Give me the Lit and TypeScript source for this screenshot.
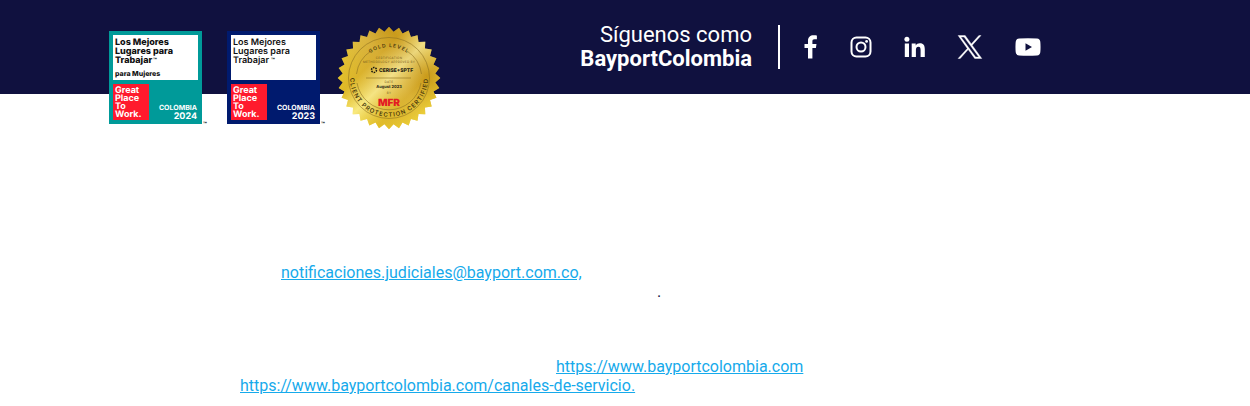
import { LitElement, html, svg, css } from "lit";
import { customElement, property } from "lit/decorators.js";

const TEETH = 32;

/** Outline of the serrated edge of the gold seal, centred on the origin. */
function sealEdge(outer: number, inner: number): string {
  const points: string[] = [];
  for (let i = 0; i < TEETH * 2; i++) {
    const radius = i % 2 ? inner : outer;
    const angle = (i * Math.PI) / TEETH - Math.PI / 2;
    points.push(`${(radius * Math.cos(angle)).toFixed(2)},${(radius * Math.sin(angle)).toFixed(2)}`);
  }
  return points.join(" ");
}

@customElement("work-badge")
export class WorkBadge extends LitElement {
  @property() year = "";
  @property() audience = "";

  static styles = css`
    :host { display: block; }
    svg { display: block; overflow: visible; }
    text { font-family: Inter, "Liberation Sans", sans-serif; text-rendering: geometricPrecision; }
    .frame { fill: #001a6e; }
    .frame.teal { fill: #009a99; }
    .panel { fill: #fff; }
    .logo { fill: #ff1a2d; }
    .title { font-size: 9px; font-weight: 600; fill: #111; }
    .title.heavy { font-weight: 800; }
    .audience { font-size: 7px; font-weight: 800; fill: #111; }
    .brand { font-size: 9px; font-weight: 700; fill: #fff; }
    .country { font-size: 7px; font-weight: 700; fill: #fff; }
    .year { font-size: 9px; font-weight: 700; fill: #fff; }
    .tm { font-size: 6px; font-weight: 800; fill: #111; }
  `;

  render() {
    const heavy = this.audience !== "";
    return html`
      <svg width="100" height="94" viewBox="0 0 100 94" role="img" aria-label="Great Place To Work Colombia ${this.year}">
        <rect class="frame ${heavy ? "teal" : ""}" width="93" height="93"></rect>
        <rect class="panel" x="4" y="4" width="85" height="45"></rect>
        <text class="title ${heavy ? "heavy" : ""}">
          <tspan x="6" y="14">Los Mejores</tspan>
          <tspan x="6" y="23">Lugares para</tspan>
          <tspan x="6" y="32">Trabajar</tspan>
        </text>
        <text class="tm" x="44" y="31">™</text>
        ${heavy ? svg`<text class="audience" x="6" y="45">${this.audience}</text>` : ""}
        <rect class="logo" x="4" y="53" width="36" height="36"></rect>
        <text class="brand">
          <tspan x="6" y="62">Great</tspan>
          <tspan x="6" y="70">Place</tspan>
          <tspan x="6" y="78">To</tspan>
          <tspan x="6" y="86">Work.</tspan>
        </text>
        <text class="country" x="88" y="79" text-anchor="end">COLOMBIA</text>
        <text class="year" x="88" y="88" text-anchor="end">${this.year}</text>
        <text class="tm" x="94" y="95">™</text>
      </svg>
    `;
  }
}

@customElement("gold-seal")
export class GoldSeal extends LitElement {
  static styles = css`
    :host { display: block; }
    svg { display: block; }
    text { font-family: Inter, "Liberation Sans", sans-serif; text-rendering: geometricPrecision; fill: #4c3a0c; }
    .ring { fill: none; stroke: #8d7020; stroke-width: 0.6; }
    .arc { font-size: 6px; font-weight: 600; letter-spacing: 1px; }
    .arc.top { font-size: 5px; }
    .small { font-size: 3px; letter-spacing: 0.3px; fill: #74591a; }
    .partner { font-size: 5px; font-weight: 800; fill: #1d1a10; }
    .date { font-size: 4px; font-weight: 700; fill: #1d1a10; }
    .mfr { font-size: 10px; font-weight: 900; fill: #e31b23; }
  `;

  render() {
    return html`
      <svg width="104" height="104" viewBox="-52 -52 104 104" role="img" aria-label="Client Protection Certified, Gold Level">
        <defs>
          <linearGradient id="gold" x1="0.1" y1="0.85" x2="0.95" y2="0.2">
            <stop offset="0" stop-color="#fbe62c"></stop>
            <stop offset="0.25" stop-color="#efd33c"></stop>
            <stop offset="0.45" stop-color="#e6c64c"></stop>
            <stop offset="0.55" stop-color="#e2c050"></stop>
            <stop offset="0.78" stop-color="#c4951a"></stop>
            <stop offset="1" stop-color="#e9cd52"></stop>
          </linearGradient>
          <linearGradient id="sheen" x1="0.1" y1="0.1" x2="0.9" y2="0.9">
            <stop offset="0.1" stop-color="#c79a1c" stop-opacity="0.3"></stop>
            <stop offset="0.3" stop-color="#cfa01f" stop-opacity="0.6"></stop>
            <stop offset="0.5" stop-color="#f9eda0" stop-opacity="0.7"></stop>
            <stop offset="0.72" stop-color="#cfa01a" stop-opacity="0.5"></stop>
            <stop offset="1" stop-color="#f8e23c" stop-opacity="0.9"></stop>
          </linearGradient>
          <path id="upper" d="M-31 0A31 31 0 0 1 31 0"></path>
          <path id="lower" d="M-38 -9A39 39 0 1 0 38 -9"></path>
        </defs>
        <polygon points=${sealEdge(51.3, 46.5)} fill="url(#gold)"></polygon>
        <polygon points=${sealEdge(51.3, 46.5)} fill="url(#sheen)"></polygon>
        <circle class="ring" r="40.5"></circle>
        <path class="ring" d="M-32.5 -4A32.5 32.5 0 0 1 -18 -27M18 -27A32.5 32.5 0 0 1 32.5 -4M-32 5A32.5 32.5 0 0 0 32 5"></path>
        <text class="arc top" text-anchor="middle"><textPath href="#upper" startOffset="50%">GOLD LEVEL</textPath></text>
        <text class="arc" text-anchor="middle"><textPath href="#lower" startOffset="50%">CLIENT PROTECTION CERTIFIED</textPath></text>
        <text class="small" text-anchor="middle"><tspan x="0" y="-19">CERTIFICATION</tspan><tspan x="0" y="-15">METHODOLOGY APPROVED BY</tspan></text>
        <circle cx="-15" cy="-8" r="2.5" fill="none" stroke="#1d1a10" stroke-width="1.5" stroke-dasharray="1.6 1"></circle>
        <text class="partner" x="-10" y="-6">CERISE+SPTF</text>
        <path class="ring" d="M-23 0H22"></path>
        <text class="small" x="0" y="5" text-anchor="middle">DATE</text>
        <text class="date" x="0" y="10" text-anchor="middle">August 2023</text>
        <text class="small" x="0" y="16" text-anchor="middle">BY</text>
        <text class="mfr" x="0" y="28" text-anchor="middle">MFR</text>
      </svg>
    `;
  }
}

@customElement("social-links")
export class SocialLinks extends LitElement {
  static styles = css`
    :host { display: block; }
    nav { display: flex; align-items: center; gap: 32px; }
    a { display: block; color: #fff; }
    svg { display: block; fill: currentColor; }
  `;

  render() {
    return html`
      <nav aria-label="Redes sociales">
        <a href="#facebook" aria-label="Facebook">
          <svg width="14" height="24" viewBox="0 0 14 24"><path d="M4 23.5V13H.5V9H4V6C4 2.200 6.200.3 9.500.3c1.600 0 3 .1 3.400.2v3.700h-2.300c-1.800 0-2.200.9-2.200 2.200V9h4.100l-.6 4H8.400v10.500z"></path></svg>
        </a>
        <a href="#instagram" aria-label="Instagram">
          <svg width="22" height="22" viewBox="0 0 22 22">
            <rect x="1.500" y="1.500" width="19" height="19" rx="5" fill="none" stroke="currentColor" stroke-width="2"></rect>
            <circle cx="11" cy="11" r="4.500" fill="none" stroke="currentColor" stroke-width="2"></circle>
            <circle cx="16.600" cy="5.400" r="1.400"></circle>
          </svg>
        </a>
        <a href="#linkedin" aria-label="LinkedIn">
          <svg width="21" height="22" viewBox="0 0 21 22"><circle cx="2.900" cy="3.200" r="2.500"></circle><path d="M.8 7.500H5V21H.8zM7.700 7.500h4v1.900c.8-1.400 2.300-2.200 4.100-2.200 4 0 5 2.500 5 6.100V21h-4.200v-6.800c0-1.700-.2-3.400-2.200-3.400s-2.500 1.500-2.500 3.300V21H7.700z"></path></svg>
        </a>
        <a href="#x" aria-label="X">
          <svg width="26" height="24" viewBox="0 0 26 24"><path fill-rule="evenodd" stroke="currentColor" stroke-width="0.4" d="M15.200 10.200 24 .5h-2.100l-7.600 8.400L8.200.5H1.100l9.200 12.900L1.100 23.500h2.100l8-8.900 6.500 8.900h7.100zM3.900 2H7.100L21.800 22h-3.200z"></path></svg>
        </a>
        <a href="#youtube" aria-label="YouTube">
          <svg width="26" height="18" viewBox="0 0 26 18"><path fill-rule="evenodd" d="M4 .5Q13-.2 22 .5q3 .3 3.300 3.300.5 5.200 0 10.400-.3 3-3.300 3.300-9 .7-18 0-3-.3-3.300-3.300-.5-5.200 0-10.400Q1 .8 4 .5zM10.500 5.300v7.400L17 9z"></path></svg>
        </a>
      </nav>
    `;
  }
}

@customElement("app-root")
export class AppRoot extends LitElement {
  static styles = css`
    :host {
      display: block;
      font-family: Roboto, "Liberation Sans", sans-serif;
      color: #10113f;
      background: #fff;
    }
    header { background: #10113f; color: #fff; }
    .inner { box-sizing: border-box; max-width: 1032px; margin: 0 auto; }
    .bar { display: flex; justify-content: space-between; align-items: flex-start; padding: 23px 100px 0 0; }
    .badges { display: flex; align-items: center; gap: 18px; margin-top: 3px; margin-bottom: -36px; }
    .badges gold-seal { margin-left: -8px; }
    .follow { display: flex; align-items: center; }
    .follow p { margin: 0; font-size: 22px; line-height: 24px; text-align: right; }
    .follow strong { display: block; font-weight: 700; }
    .follow social-links { margin-left: 24px; }
    .rule { width: 2px; height: 44px; margin-left: 26px; background: #fff; }
    .legal { padding-top: 169px; padding-bottom: 12px; font-size: 16px; line-height: 19px; }
    .legal p { margin: 0; }
    .legal a { color: #16aaeb; text-decoration: underline; }
    .legal .mail { padding-left: 172px; }
    .legal .stop { padding-left: 548px; }
    .legal .site { padding-left: 447px; padding-top: 56px; }
    .legal .service { padding-left: 131px; }
  `;

  render() {
    return html`
      <header>
        <div class="inner bar">
          <div class="badges">
            <work-badge year="2024" audience="para Mujeres"></work-badge>
            <work-badge year="2023"></work-badge>
            <gold-seal></gold-seal>
          </div>
          <div class="follow">
            <p>Síguenos como <strong>BayportColombia</strong></p>
            <div class="rule"></div>
            <social-links></social-links>
          </div>
        </div>
      </header>
      <main class="inner legal">
        <p class="mail"><a href="mailto:notificaciones.judiciales@bayport.com.co">notificaciones.judiciales@bayport.com.co,</a></p>
        <p class="stop">.</p>
        <p class="site"><a href="https://www.bayportcolombia.com">https://www.bayportcolombia.com</a></p>
        <p class="service"><a href="https://www.bayportcolombia.com/canales-de-servicio">https://www.bayportcolombia.com/canales-de-servicio.</a></p>
      </main>
    `;
  }
}
